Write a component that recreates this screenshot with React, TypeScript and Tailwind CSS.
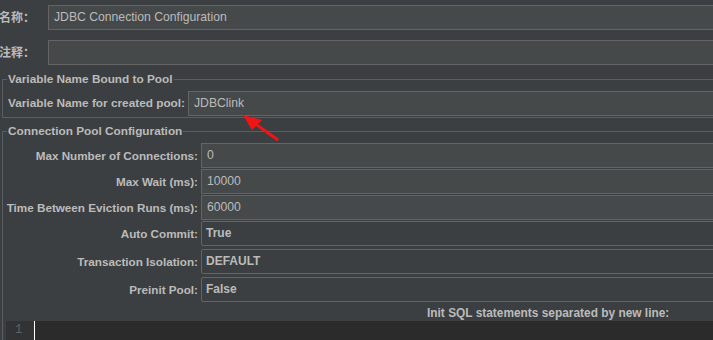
import React from "react";

const FONT = "font-['Liberation_Sans','Noto_Sans_CJK_SC',sans-serif]";

function TextRow({ label, value, mt }: { label: string; value: string; mt: string }) {
  return (
    <div className={`flex h-[25px] ${mt}`}>
      <div className="w-[195px] shrink-0 whitespace-nowrap text-right font-bold text-[11.7px] leading-[25px]">{label}</div>
      <div className="ml-[3px] flex-1 h-[25px] border border-[#646464] bg-[#45494a] pl-[5px] text-[12.2px] leading-[23px]">{value}</div>
    </div>
  );
}

function ComboRow({ label, value, mt }: { label: string; value: string; mt: string }) {
  return (
    <div className={`flex h-[25px] ${mt}`}>
      <div className="w-[195px] shrink-0 whitespace-nowrap text-right font-bold text-[11.7px] leading-[25px]">{label}</div>
      <div className="ml-[3px] flex-1 h-[25px] border border-[#646464] rounded-[2px] bg-[#3c3f41] pl-[4px] leading-[22px] font-bold text-[12px]">{value}</div>
    </div>
  );
}

export default function App() {
  return (
    <div className={`relative w-[713px] h-[340px] overflow-hidden bg-[#3c3f41] text-[12px] text-[#bbbbbb] ${FONT}`}>
      <div className="w-[760px] flex flex-col">
        <div className="flex items-center mt-[5px] h-[25px]">
          <div className="w-[49px] -ml-[1px] shrink-0 font-bold">名称：</div>
          <div className="flex-1 h-[25px] border border-[#646464] bg-[#45494a] pl-[5px] text-[12.2px] leading-[23px]">JDBC Connection Configuration</div>
        </div>
        <div className="flex items-center mt-[10px] h-[25px]">
          <div className="w-[49px] -ml-[1px] shrink-0 font-bold">注释：</div>
          <div className="flex-1 h-[25px] border border-[#646464] bg-[#45494a]"></div>
        </div>

        <fieldset className="ml-[2px] mt-[7px] border border-[#5b5e60] p-0 pt-[5px] pb-[1px] min-w-0">
          <legend className="ml-[4px] px-[1px] font-bold text-[11.8px] leading-[14px]">Variable Name Bound to Pool</legend>
          <div className="flex h-[25px]">
            <div className="w-[182px] shrink-0 whitespace-nowrap text-right font-bold text-[11.8px] leading-[25px]">Variable Name for created pool:</div>
            <div className="ml-[3px] flex-1 h-[25px] border border-[#646464] bg-[#45494a] pl-[5px] text-[12.2px] leading-[23px]">JDBClink</div>
          </div>
        </fieldset>

        <fieldset className="ml-[2px] mt-[6px] border border-[#5b5e60] p-0 pt-[5px] min-w-0">
          <legend className="ml-[4px] px-[1px] font-bold text-[11.8px] leading-[14px]">Connection Pool Configuration</legend>
          <TextRow label="Max Number of Connections:" value="0" mt="" />
          <TextRow label="Max Wait (ms):" value="10000" mt="mt-[1px]" />
          <TextRow label="Time Between Eviction Runs (ms):" value="60000" mt="mt-[1px]" />
          <ComboRow label="Auto Commit:" value="True" mt="mt-[1px]" />
          <ComboRow label="Transaction Isolation:" value="DEFAULT" mt="mt-[3px]" />
          <ComboRow label="Preinit Pool:" value="False" mt="mt-[3px]" />
          <div className="mt-[4px] ml-[424px] whitespace-nowrap font-bold text-[11.9px] leading-[14px]">Init SQL statements separated by new line:</div>
          <div className="mt-[1px] ml-[3px] flex h-[40px] bg-[#2b2b2b]">
            <div className="w-[28px] shrink-0 bg-[#313335] pl-[9px] pt-[1px] leading-[16px] text-[#606366] font-['Liberation_Mono',monospace] text-[12px]">1</div>
            <div className="border-l border-white h-[40px]"></div>
          </div>
        </fieldset>
      </div>

      <svg className="absolute left-0 top-0 pointer-events-none" width="713" height="340" viewBox="0 0 713 340">
        <line x1="278" y1="140" x2="254" y2="123" stroke="#f01414" strokeWidth="3" />
        <polygon points="243,115 262,120 252,130" fill="#f01414" />
      </svg>
    </div>
  );
}
